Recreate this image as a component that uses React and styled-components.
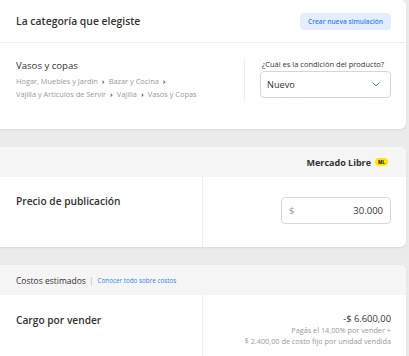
import React from 'react';
import styled, { createGlobalStyle } from 'styled-components';

const GlobalStyle = createGlobalStyle`
  body {
    margin: 0;
    background: #ebebeb;
    font-family: 'Open Sans', 'Liberation Sans', sans-serif;
    color: #333;
  }
`;

// LAYOUT
const Page = styled.div`
  width: 406px;
  display: flex;
  flex-direction: column;
  gap: 18px;
  padding-bottom: 40px;
`;

const Card = styled.section`
  background: #fff;
  border-radius: 0 6px 6px 0;
  box-shadow: 0 1px 2px rgba(0, 0, 0, 0.08);
  overflow: hidden;
`;

const CardHeader = styled.header`
  display: flex;
  align-items: center;
  justify-content: ${(p) => p.$justify || 'space-between'};
  height: ${(p) => p.$height || '30px'};
  padding: 0 15px 0 16px;
  background: ${(p) => p.$bg || '#f5f5f5'};
  border-bottom: ${(p) => (p.$line ? '1px solid #ededed' : 'none')};
`;

const Title = styled.h2`
  margin: 0;
  font-size: 10.4px;
  font-weight: 600;
  color: #333;
`;

const GhostButton = styled.button`
  height: 17px;
  padding: 0 8px;
  border: none;
  border-radius: 4px;
  background: #e3edfb;
  color: #3483fa;
  font-family: inherit;
  font-size: 6.6px;
  font-weight: 600;
  cursor: pointer;
`;

// CATEGORY
const CategoryBody = styled.div`
  display: flex;
  padding: 16px 15px 28px 16px;
`;

const CategoryInfo = styled.div`
  flex: 1;
  border-right: 1px solid #ededed;
`;

const CategoryName = styled.p`
  margin: 0 0 2px;
  font-size: 9.6px;
  color: #333;
  line-height: 14px;
`;

const Crumbs = styled.p`
  margin: 0;
  font-size: 7.4px;
  color: #999;
  line-height: 13px;
  padding-right: 10px;

  span {
    color: #555;
    font-weight: 700;
    margin: 0 4px;
    font-size: 7.6px;
  }
`;

const Condition = styled.div`
  width: 131px;
  padding-left: 15px;
  display: flex;
  flex-direction: column;
`;

const FieldLabel = styled.label`
  font-size: 7.5px;
  color: #333;
  line-height: 11px;
  padding-left: 2px;
`;

const SelectBox = styled.div`
  height: 27px;
  margin-top: 1px;
  box-sizing: border-box;
  border: 1px solid #d6d6d6;
  border-radius: 4px;
  display: flex;
  align-items: center;
  justify-content: space-between;
  padding: 0 10px 0 6px;
  font-size: 9.2px;
  color: #333;
`;

// ROWS
const Row = styled.div`
  display: flex;
  min-height: ${(p) => p.$height || '70px'};
`;

const RowLabel = styled.div`
  width: 203px;
  box-sizing: border-box;
  border-right: 1px solid #ededed;
  padding: ${(p) => p.$pad || '17px 16px'};
  font-size: 10.2px;
  line-height: 14px;
  font-weight: 600;
  color: #333;
`;

const RowValue = styled.div`
  flex: 1;
  display: flex;
  flex-direction: column;
  align-items: flex-end;
  padding: ${(p) => p.$pad || '20px 15px'};
`;

const PriceInput = styled.div`
  width: 110px;
  height: 27px;
  box-sizing: border-box;
  border: 1px solid #d6d6d6;
  border-radius: 4px;
  display: flex;
  align-items: center;
  justify-content: space-between;
  padding: 0 7px;
  font-size: 9.5px;
  color: #333;

  span {
    color: #999;
  }
`;

const Brand = styled.div`
  display: flex;
  align-items: center;
  gap: 4px;
  margin-right: 3px;
  font-size: 9px;
  font-weight: 700;
  color: #333;
`;

const Badge = styled.span`
  display: inline-flex;
  align-items: center;
  justify-content: center;
  width: 13px;
  height: 8px;
  border-radius: 4px;
  background: #ffe600;
  color: #333;
  font-size: 4.5px;
  font-weight: 800;
`;

const HeaderText = styled.div`
  display: flex;
  align-items: center;
  font-size: 8.5px;
  color: #333;

  i {
    font-style: normal;
    color: #bbb;
    margin: 0 4px 0 3px;
  }

  a {
    color: #3483fa;
    font-size: 6.3px;
    text-decoration: none;
  }
`;

const Amount = styled.div`
  font-size: 9.4px;
  color: #333;
  line-height: 13px;
`;

const Note = styled.div`
  font-size: 7.3px;
  color: #999;
  line-height: 11px;
  text-align: right;
`;

const Chevron = () => (
  <svg width='8' height='5' viewBox='0 0 8 5' fill='none'>
    <polyline points='0.5,0.5 4,4 7.5,0.5' stroke='#3483fa' strokeWidth='1' />
  </svg>
);

function App() {
  return (
    <>
      <GlobalStyle />
      <Page>
        <Card>
          <CardHeader $height='42px' $bg='#fff' $line>
            <Title>La categoría que elegiste</Title>
            <GhostButton>Crear nueva simulación</GhostButton>
          </CardHeader>
          <CategoryBody>
            <CategoryInfo>
              <CategoryName>Vasos y copas</CategoryName>
              <Crumbs>
                Hogar, Muebles y Jardín<span>›</span>Bazar y Cocina<span>›</span>
                <br />
                Vajilla y Artículos de Servir<span>›</span>Vajilla<span>›</span>Vasos y Copas
              </Crumbs>
            </CategoryInfo>
            <Condition>
              <FieldLabel>¿Cuál es la condición del producto?</FieldLabel>
              <SelectBox>
                Nuevo
                <Chevron />
              </SelectBox>
            </Condition>
          </CategoryBody>
        </Card>

        <Card>
          <CardHeader $justify='flex-end'>
            <Brand>
              Mercado Libre <Badge>ML</Badge>
            </Brand>
          </CardHeader>
          <Row>
            <RowLabel>Precio de publicación</RowLabel>
            <RowValue>
              <PriceInput>
                <span>$</span>
                30.000
              </PriceInput>
            </RowValue>
          </Row>
        </Card>

        <Card>
          <CardHeader $justify='flex-start'>
            <HeaderText>
              Costos estimados<i>|</i>
              <a href='#'>Conocer todo sobre costos</a>
            </HeaderText>
          </CardHeader>
          <Row $height='80px'>
            <RowLabel $pad='18px 16px'>Cargo por vender</RowLabel>
            <RowValue $pad='17px 15px'>
              <Amount>-$ 6.600,00</Amount>
              <Note>
                Pagás el 14,00% por vender +
                <br />$ 2.400,00 de costo fijo por unidad vendida
              </Note>
            </RowValue>
          </Row>
        </Card>
      </Page>
    </>
  );
}

export default App;
